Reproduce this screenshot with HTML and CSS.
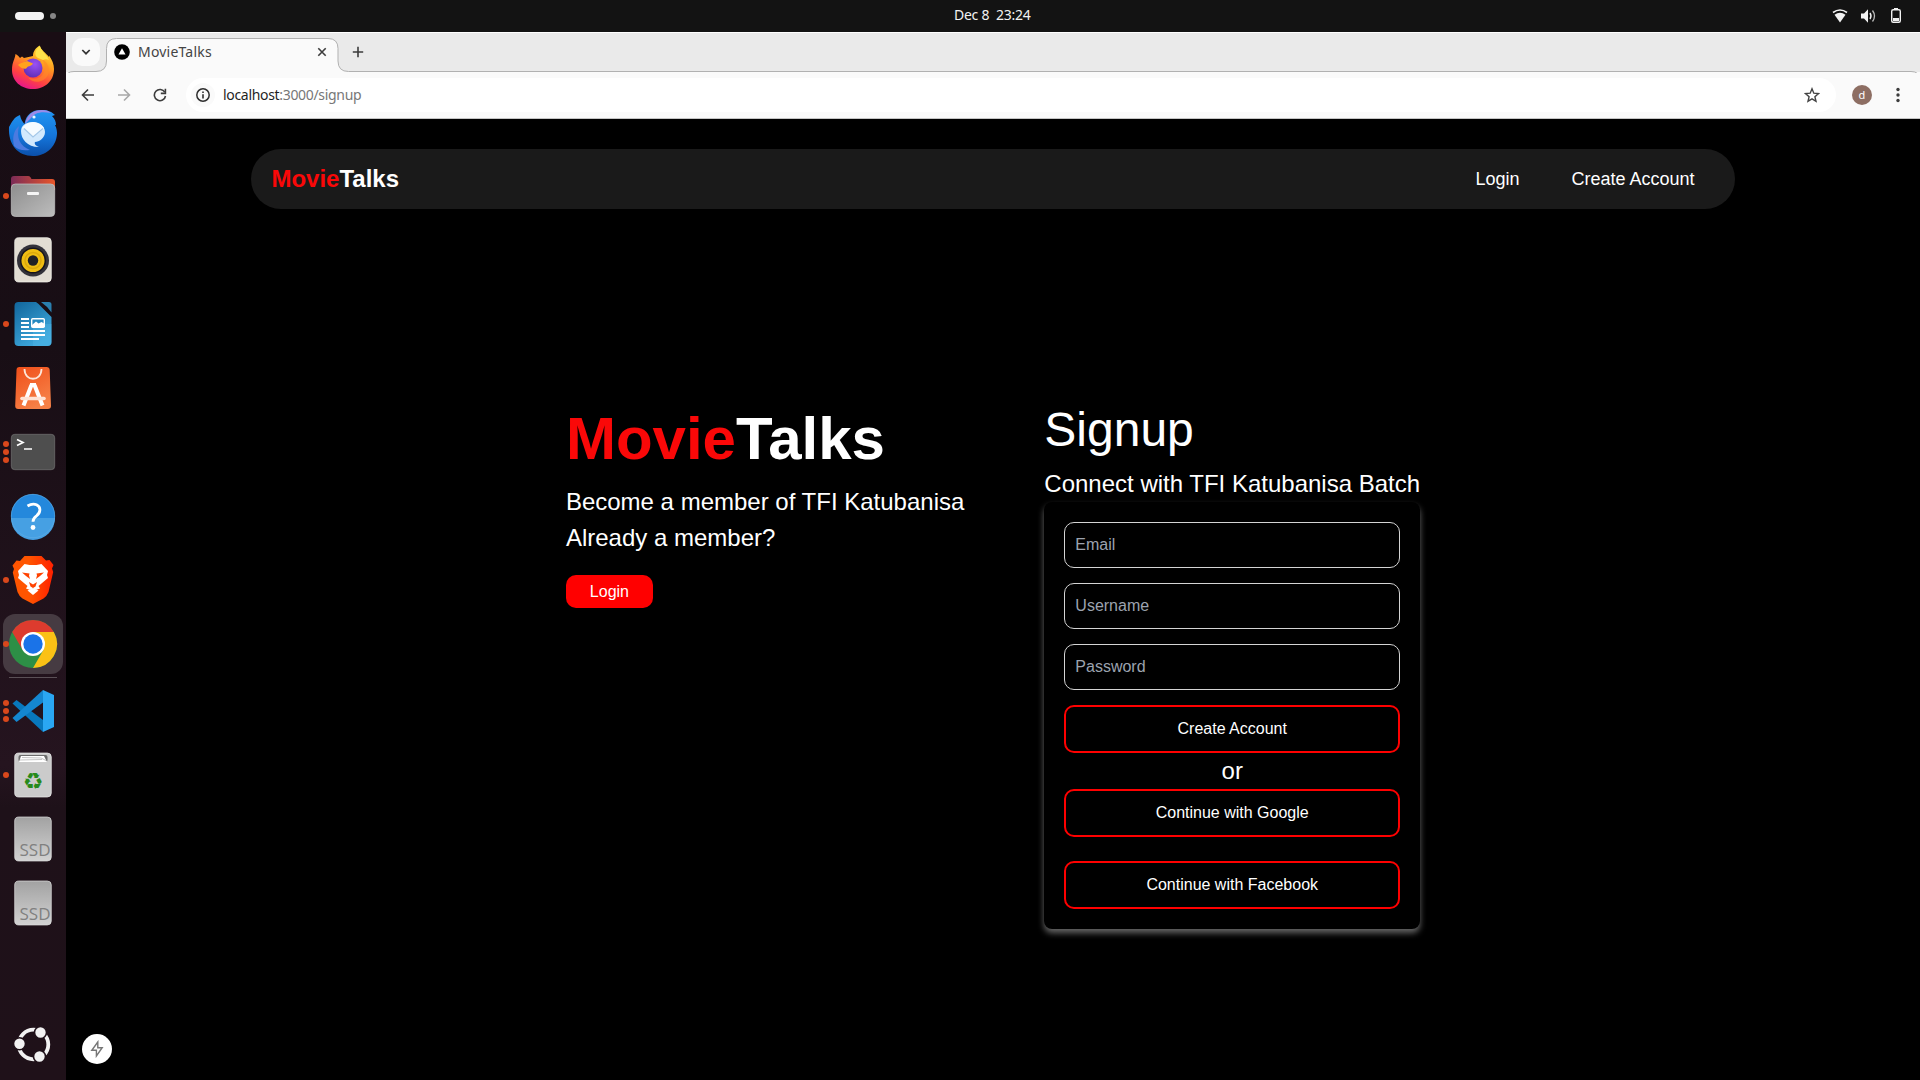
FILE: index.html
```html
<!DOCTYPE html>
<html lang="en">
<head>
<meta charset="utf-8">
<title>MovieTalks</title>
<link rel="stylesheet" href="styles.css">
</head>
<body>
<div class="desktop">
  <header class="topbar">
    <div class="workspaces"><span class="ws-active"></span><span class="ws-dot"></span></div>
    <div class="clock">Dec 8&nbsp; 23:24</div>
    <svg class="tray" width="88" height="32" viewBox="1832 0 88 32">
      <path d="M1833 12.500Q1840 7.500 1847 12.500" fill="none" stroke="#f2f2f2" stroke-width="1.600"/>
      <path d="M1834.500 14.800Q1840 10.500 1845.500 14.800L1840 22.500Z" fill="#f2f2f2"/>
      <path d="M1861 13.500h3l4-4.200v13.400l-4-4.200h-3z" fill="#f2f2f2"/>
      <path d="M1870 13q2 3 0 6" fill="none" stroke="#f2f2f2" stroke-width="1.400"/>
      <path d="M1872.500 10.500q4 5.500 0 11" fill="none" stroke="#bbb" stroke-width="1.300"/>
      <path d="M1894 8h4v2h-4z" fill="#f2f2f2"/>
      <rect x="1891.700" y="9.700" width="8.600" height="12.600" rx="1.500" fill="none" stroke="#f2f2f2" stroke-width="1.400"/>
      <path d="M1893 18h6v3h-6z" fill="#f2f2f2"/>
    </svg>
  </header>

  <nav class="dock">
    <div class="dock-item">
      <svg width="66" height="64" viewBox="0 0 66 64">
        <defs>
          <linearGradient id="fx" x1=".8" y1="0" x2=".35" y2="1"><stop offset="0" stop-color="#ffe83a"/><stop offset=".4" stop-color="#ff9a1f"/><stop offset=".75" stop-color="#ff4242"/><stop offset="1" stop-color="#e6178a"/></linearGradient>
          <radialGradient id="fxp" cx=".6" cy=".3" r=".8"><stop offset="0" stop-color="#9a50f5"/><stop offset="1" stop-color="#5a2bb0"/></radialGradient>
        </defs>
        <path d="M12 34C12 26 15 23 15.500 18C18 19 19 21 20 22L22 20.500L24 22L33 20C33 15 36 12 39.500 9.500C41 14 46 17 49 21V19.500C52 24 54 28 54 33C54 45 45 53 33 53S12 45 12 34Z" fill="url(#fx)"/>
        <circle cx="33" cy="32" r="9.500" fill="url(#fxp)"/>
        <path d="M18 29C21 26 24 27 27 25L33 27.500C32 30 28 30 27 31.500C26 34 22 33 18 29Z" fill="#ffa21c"/>
        <path d="M40 22C44 25 46 30 44 36C42 42 35 44 28 41.500C33 48 44 47 48 39C51 32 47 25 40 22Z" fill="#ff8a26" opacity=".6"/>
        <path d="M40 10C41 15 47 19 49 24C47 23 45 23 43 24L38 22C33 19 36 13 40 10Z" fill="#ffe24a"/>
      </svg>
    </div>
    <div class="dock-item">
      <svg width="66" height="64" viewBox="0 0 66 64">
        <defs><linearGradient id="tb" x1="0" y1="0" x2="0" y2="1"><stop offset="0" stop-color="#2196f3"/><stop offset=".6" stop-color="#1473d8"/><stop offset="1" stop-color="#0b4faa"/></linearGradient></defs>
        <path d="M9 27C12 22 14 17 20 15C21 20 23 22 24.500 24C26 14 33 9.500 42 10C48 10 52 12 55 15L52 16C55 19 56 22 56 25L55 25C57 29 57 32 57 34C56 48 45 56 33 56C18 56 8 45 9 27Z" fill="url(#tb)"/>
        <path d="M25 24C27 14 34 10 42 10C46 10 49 11 51 13C40 11 35 13 31 18L25 24Z" fill="#9b8be8"/>
        <path d="M14 46C12 37 14 30 19 26C16 38 20 46 30 50C23 51 18 50 14 46Z" fill="#4b7be0"/>
        <circle cx="34" cy="17" r="1.600" fill="#eaf6ff"/>
        <path d="M21 31C21 25 27 22 33 22S45 26 45 32C45 38 39 42 35 42C34 44 36 46 39 47C27 47 21 39 21 31Z" fill="#d2e9fd"/>
        <path d="M22 30C22 26 28 22 33 22S44.500 26 44 29L33 37L23 28" fill="#f5fbff"/>
        <path d="M24 28.500L33 37L43 28.500" fill="none" stroke="#a3c7e8" stroke-width="1.200"/>
      </svg>
    </div>
    <div class="dock-item">
      <svg width="66" height="64" viewBox="0 0 66 64">
        <defs>
          <linearGradient id="fo"><stop offset="0" stop-color="#7b2b57"/><stop offset="1" stop-color="#e9562a"/></linearGradient>
          <linearGradient id="fg" x2="1" y2="1"><stop offset="0" stop-color="#8e8e8e"/><stop offset="1" stop-color="#bdbdbd"/></linearGradient>
        </defs>
        <path d="M11 15q0-3 3-3h14q1.500 0 2.500 1.300l1 1.700h20.500q3 0 3 3v8H11z" fill="url(#fo)"/>
        <rect x="11.300" y="20" width="43.400" height="32.500" rx="4" fill="url(#fg)" stroke="#c4c4c4" stroke-width=".7"/>
        <rect x="27" y="28" width="12" height="3" rx="1" fill="#f5f5f5"/>
      </svg>
      <span class="dots"><i></i></span>
    </div>
    <div class="dock-item">
      <svg width="66" height="64" viewBox="0 0 66 64">
        <rect x="14.700" y="9.700" width="36.600" height="44.300" rx="4" fill="#e2ddd3" stroke="#f5f3ee" stroke-width=".7"/>
        <circle cx="33" cy="32.500" r="16" fill="#33323a"/><circle cx="33" cy="32.500" r="12.300" fill="#efbd13" stroke="#16151d" stroke-width="1.500"/><circle cx="33" cy="32.500" r="8" fill="none" stroke="#dba80c" stroke-width="1.500"/><circle cx="33" cy="32.500" r="5.200" fill="#202024"/>
      </svg>
    </div>
    <div class="dock-item">
      <svg width="66" height="64" viewBox="0 0 66 64">
        <defs><linearGradient id="wr" x1="0" y1="0" x2=".6" y2="1"><stop offset="0" stop-color="#11659b"/><stop offset="1" stop-color="#3faade"/></linearGradient></defs>
        <path d="M18.500 10H36Q39 12 41 14.500L51.500 25V50q0 4-4 4h-29q-4 0-4-4V14q0-4 4-4z" fill="url(#wr)"/>
        <path d="M33 32h18.500v18q0 4-4 4H33z" fill="#52b7e6" opacity=".4"/>
        <path d="M41 10h8q2.500 0 2.500 2.500V20.500Q47 14 41 10z" fill="#2a7fae"/>
        <path d="M21 27h8M21 31h8M21 35h8M21 39h24M21 43h24M21 47h18" stroke="#fff" stroke-width="2"/>
        <rect x="31.700" y="26.700" width="12.600" height="8.600" rx="1" fill="#2589c0" stroke="#fff" stroke-width="1.400"/>
        <path d="M32 35v-2l4-3.500 2.500 2 3-1.500L45 32v3z" fill="#fff"/>
      </svg>
      <span class="dots"><i></i></span>
    </div>
    <div class="dock-item">
      <svg width="66" height="64" viewBox="0 0 66 64">
        <defs><linearGradient id="ac" x2=".5" y2="1"><stop offset="0" stop-color="#f04e19"/><stop offset="1" stop-color="#f68046"/></linearGradient></defs>
        <path d="M19.500 11h27q3 0 3.200 3l1.300 36q0 3-3.200 3H18.200q-3 0-3-3l1.300-36q0-3 3-3z" fill="url(#ac)"/>
        <path d="M24.500 13c0 13 17 13 17 0" fill="none" stroke="#fde6d9" stroke-width="1.800"/>
        <path d="M31.500 29L23.500 49.500M34.500 29L42.500 49.500" stroke="#fff" stroke-width="4"/>
        <path d="M30 27h6v4h-6z" fill="#fff"/>
        <path d="M22 42.500H44" stroke="#ffe3d4" stroke-width="3.600" stroke-linecap="round"/>
      </svg>
    </div>
    <div class="dock-item">
      <svg width="66" height="64" viewBox="0 0 66 64">
        <rect x="11.300" y="14.300" width="43.400" height="35.400" rx="3.500" fill="#4e4e4e" stroke="#737373" stroke-width=".7"/>
        <path d="M17 19.500L23 22.500L17 25.500M24 29h8" fill="none" stroke="#fff" stroke-width="1.700"/>
      </svg>
      <span class="dots"><i></i><i></i><i></i></span>
    </div>
    <div class="dock-item">
      <svg width="66" height="64" viewBox="0 0 66 64">
        <circle cx="33" cy="32" r="22" fill="#2488dc"/><path d="M11 34h44a22 22 0 0 1-44 0z" fill="#46a0e3"/>
        <circle cx="33" cy="32" r="21.700" fill="none" stroke="#62aee5" stroke-width=".6"/>
        <path d="M27.500 22q5-3 9-1.200c5 2.500 4 8 0 11q-3.500 2.500-3.500 6" fill="none" stroke="#fff" stroke-width="2.800"/><circle cx="33" cy="43.500" r="2.400" fill="#fff"/>
      </svg>
    </div>
    <div class="dock-item">
      <svg width="66" height="64" viewBox="0 0 66 64">
        <defs><linearGradient id="br"><stop offset=".4" stop-color="#ff5500"/><stop offset="1" stop-color="#ff2000"/></linearGradient></defs>
        <path d="M24.500 8h17l4.500 4.500 3.500-.5 4 5-1.500 3.500 1.200 3.500L48.500 44q-1.500 4-5 6.500L33 56l-10.500-5.500q-3.500-2.500-5-6.500L12.800 24.500 14 21l-1.500-3.500 4-5 3.500.5z" fill="url(#br)"/>
        <path d="M24.500 16l5 1h7l5-1 6.500 7-1 4 1 3-9.500 8 1.500 2.500L36 42l-3-1.800L30 42l-4-1.500 1.500-2.500-9.500-8 1-3-1-4z" fill="#fff"/>
        <path d="M22 24.500l7.500 1-.5 2 1 3.500-4-3zM44 24.500l-7.500 1 .5 2-1 3.500 4-3zM29 34l4 2.500 4-2.500-1.500 4.500L33 40l-2.500-1.500z" fill="#ff4200"/>
        <path d="M27.500 42.500l5.500-2.500 5.500 2.500L33 47z" fill="#fff"/>
      </svg>
      <span class="dots"><i></i></span>
    </div>
    <div class="dock-item dock-active">
      <svg width="66" height="64" viewBox="0 0 66 64">
        <circle cx="33" cy="32" r="24" fill="#2d8f46"/>
        <path d="M12.200 20A24 24 0 0 1 53.800 20L33 20L22.600 38Z" fill="#dd3b2e"/>
        <path d="M53.800 20A24 24 0 0 1 33 56L43.400 38L33 20Z" fill="#fbc116"/>
        <circle cx="33" cy="32" r="12" fill="#fff"/><circle cx="33" cy="32" r="9.700" fill="#1a73e8"/>
      </svg>
      <span class="dots"><i></i></span>
    </div>
    <div class="dock-separator"></div>
    <div class="dock-item">
      <svg width="66" height="64" viewBox="0 0 66 64">
        <path d="M12.500 24.500L16.500 21 43 41V53Z" fill="#0878bd"/>
        <path d="M43 11L12.500 39 16.500 43 43 23.500Z" fill="#1487d1"/>
        <path d="M43 11L54 16V48L43 53Z" fill="#2aa7f3"/>
      </svg>
      <span class="dots"><i></i><i></i><i></i></span>
    </div>
    <div class="dock-item">
      <svg width="66" height="64" viewBox="0 0 66 64">
        <defs><linearGradient id="dk" x2="0" y2="1"><stop offset="0" stop-color="#a2a2a2"/><stop offset="1" stop-color="#d2d2d2"/></linearGradient></defs>
        <rect x="14.700" y="10" width="36.600" height="44" rx="4" fill="#cbcbcb" stroke="#ececec" stroke-width=".7"/>
        <rect x="18.500" y="12" width="29" height="7" rx="2" fill="#6c6c6c"/>
        <path d="M21 13h23l3 6H19z" fill="#fff"/><path d="M22 14.500l19 .5 5 2.500M20 17l22-.5" fill="none" stroke="#aaa" stroke-width=".7"/>
        <text class="recycle" x="33" y="46">♻</text>
      </svg>
      <span class="dots"><i></i></span>
    </div>
    <div class="dock-item">
      <svg width="66" height="64" viewBox="0 0 66 64">
        <rect x="14.700" y="10" width="36.600" height="44" rx="4" fill="url(#dk)" stroke="#ddd" stroke-width=".7"/>
        <text class="ssd" x="19.500" y="48.500" textLength="31" lengthAdjust="spacingAndGlyphs">SSD</text>
      </svg>
    </div>
    <div class="dock-item">
      <svg width="66" height="64" viewBox="0 0 66 64">
        <rect x="14.700" y="10" width="36.600" height="44" rx="4" fill="url(#dk)" stroke="#ddd" stroke-width=".7"/>
        <text class="ssd" x="19.500" y="48.500" textLength="31" lengthAdjust="spacingAndGlyphs">SSD</text>
      </svg>
    </div>
    <div class="dock-item dock-apps">
      <svg width="66" height="64" viewBox="0 0 66 64">
        <circle cx="33.500" cy="32.500" r="14.800" fill="none" stroke="#f2f2f2" stroke-width="3.800"/>
        <g fill="#f2f2f2" stroke="#1f1119" stroke-width="1.600"><circle cx="40.500" cy="20.500" r="6"/><circle cx="19.500" cy="31.800" r="6"/><circle cx="39.500" cy="44.500" r="6"/></g>
      </svg>
    </div>
  </nav>

  <section class="browser">
    <div class="tabstrip">
      <svg class="tab-outline" width="1854" height="41" viewBox="66 32 1854 41">
        <path d="M66 73V77Q66.500 71.500 74 71.500H96Q106.500 71.500 106.500 61V48.500Q106.500 38.500 116.500 38.500H328Q338 38.500 338 48.500V61Q338 71.500 348.500 71.500H1911Q1919.500 71.500 1919.500 79V81H66Z" fill="#fafafa" stroke="#b1b1b1"/>
      </svg>
      <button class="tab-search"><svg width="10" height="8" viewBox="0 0 10 8"><path d="M1.300 2L5 5.700 8.700 2" fill="none" stroke="#333" stroke-width="1.700"/></svg></button>
      <div class="tab">
        <svg width="16" height="16" viewBox="0 0 16 16"><circle cx="8" cy="8" r="7.800"/><path d="M8 4.300L11.500 10.500h-7z" fill="#fff"/></svg>
        <span class="tab-title">MovieTalks</span>
        <svg width="10" height="10" viewBox="0 0 10 10"><path d="M1.300 1.300l7.400 7.400M8.700 1.300L1.300 8.700" stroke="#3c3c3c" stroke-width="1.600"/></svg>
      </div>
      <svg class="new-tab" width="12" height="12" viewBox="0 0 12 12"><path d="M6 .8v10.400M.8 6h10.400" stroke="#3c3c3c" stroke-width="1.600"/></svg>
    </div>
    <div class="toolbar">
      <svg class="tool" width="14" height="14" viewBox="0 0 14 14"><path d="M13 7H2M7 1.500L1.500 7 7 12.500" fill="none" stroke="#3c3c3c" stroke-width="1.600"/></svg>
      <svg class="tool" width="14" height="14" viewBox="0 0 14 14"><path d="M1 7h11M7 1.500L12.500 7 7 12.500" fill="none" stroke="#a8a8a8" stroke-width="1.600"/></svg>
      <svg class="tool" width="14" height="14" viewBox="0 0 14 14"><path d="M11.800 4.200A5.600 5.600 0 1 0 12.500 8" fill="none" stroke="#3c3c3c" stroke-width="1.600"/><path d="M12.400 .8V5.400H7.800" fill="none" stroke="#3c3c3c" stroke-width="1.600"/></svg>
      <div class="omnibox">
        <span class="site-info"><svg width="14" height="14" viewBox="0 0 14 14"><circle cx="7" cy="7" r="6.200" fill="none" stroke="#2e2e2e" stroke-width="1.500"/><path d="M7 6.200v4.200M7 3.400v1.500" stroke="#2e2e2e" stroke-width="1.600"/></svg></span>
        <span class="url">localhost<span class="url-rest">:3000/signup</span></span>
        <svg class="star" width="16" height="16" viewBox="0 0 16 16"><path d="M8 1.800l1.800 4.400 4.700.4-3.600 3.100 1.100 4.600L8 11.900l-4 2.400 1.100-4.600L1.500 6.600l4.700-.4z" fill="none" stroke="#444" stroke-width="1.400"/></svg>
      </div>
      <span class="avatar">d</span>
      <svg class="menu" width="4" height="16" viewBox="0 0 4 16"><g fill="#3c3c3c"><circle cx="2" cy="2.500" r="1.700"/><circle cx="2" cy="8" r="1.700"/><circle cx="2" cy="13.500" r="1.700"/></g></svg>
    </div>

    <main class="page">
      <nav class="site-nav">
        <a class="logo"><span class="red">Movie</span>Talks</a>
        <div class="nav-links"><a>Login</a><a>Create Account</a></div>
      </nav>
      <div class="signup">
        <section class="intro">
          <h1><span class="red">Movie</span>Talks</h1>
          <p>Become a member of TFI Katubanisa</p>
          <p>Already a member?</p>
          <button class="login">Login</button>
        </section>
        <section class="join">
          <h2>Signup</h2>
          <p>Connect with TFI Katubanisa Batch</p>
          <form class="card">
            <input type="text" placeholder="Email">
            <input type="text" placeholder="Username">
            <input type="password" placeholder="Password">
            <button class="outline" type="button">Create Account</button>
            <span class="or">or</span>
            <button class="outline" type="button">Continue with Google</button>
            <button class="outline facebook" type="button">Continue with Facebook</button>
          </form>
        </section>
      </div>
      <div class="dev-badge"><svg width="14" height="18" viewBox="0 0 14 18"><path d="M7.800 2L1.800 10.300H6.400V16L12.200 7.700H7.800Z" fill="none" stroke="#777" stroke-width="1.400"/></svg></div>
    </main>
  </section>
</div>
</body>
</html>
```
FILE: styles.css
```css
* { box-sizing: border-box; }
body { margin: 0; background: #000; font-family: "Liberation Sans", Arial, sans-serif; }
p, h1, h2 { margin: 0; }
button, input { font: inherit; margin: 0; }
svg { display: block; flex: none; }

.desktop {
  width: 1920px; height: 1080px; overflow: hidden;
  display: grid; grid-template: 32px 1fr / 66px 1fr;
}

.topbar {
  grid-column: 1 / 3; background: #131313; color: #f2f2f2;
  display: grid; grid-template-columns: 1fr auto 1fr; align-items: center;
  padding-left: 15px;
}
.workspaces { display: flex; align-items: center; gap: 6px; }
.ws-active { width: 29px; height: 8px; border-radius: 4px; background: #f4f4f4; }
.ws-dot { width: 6px; height: 6px; border-radius: 50%; background: #868686; }
.clock { font: 14px/30px "Noto Sans", sans-serif; letter-spacing: -.25px; width: 78px; margin: 0 0 2px 51px; white-space: nowrap; }
.tray { justify-self: end; }

.dock {
  display: flex; flex-direction: column; padding: 4px 0;
  background: linear-gradient(#190d14, #180e15 30%, #25141f 70%, #1e1119 74%, #1f1119);
}
.dock-item { position: relative; height: 64px; flex: none; }
.dock-active::before {
  content: ""; position: absolute; left: 3px; top: 2px; width: 60px; height: 60px;
  border-radius: 12px; background: #463b42;
}
.dock-active svg { position: relative; }
.dock-separator { height: 1px; margin: 1px 9px; background: #5a5056; flex: none; }
.dock-apps { margin-top: auto; }
.dots {
  position: absolute; left: 3px; top: 0; height: 64px;
  display: flex; flex-direction: column; justify-content: center; gap: 2.200px;
}
.dots i { width: 6px; height: 6px; border-radius: 50%; background: #d9481c; }
.recycle { font: 23px "DejaVu Sans", sans-serif; fill: #278a1b; text-anchor: middle; }
.ssd { font: 16px "Open Sans", sans-serif; fill: #808080; }

.browser { display: flex; flex-direction: column; min-width: 0; }
.tabstrip {
  position: relative; height: 40px; flex: none; background: #eaeaea;
  border-top: 1px solid #fff; display: flex; align-items: center; padding-bottom: 2px;
}
.tab-outline { position: absolute; left: 0; top: -1px; }
.tab-search {
  position: relative; width: 28px; height: 28px; margin-left: 6px; padding: 0;
  border: 0; border-radius: 10px; background: #fafafa;
  display: flex; align-items: center; justify-content: center;
}
.tab {
  position: relative; width: 231px; height: 33px; margin-left: 7px; padding: 0 11px 0 7px;
  display: flex; align-items: center; gap: 8px;
}
.tab-title { flex: 1; font: 14px/20px "Noto Sans", sans-serif; letter-spacing: .2px; color: #444; }
.new-tab { position: relative; margin-left: 14px; }

.toolbar {
  height: 47px; flex: none; background: #fafafa; border-bottom: 1px solid #c4c4c4;
  display: flex; align-items: center; padding-left: 15px;
}
.tool { margin-right: 22px; }
.omnibox {
  width: 1650px; height: 34px; margin-left: -3px; padding: 0 16px 0 5px;
  border-radius: 17px; background: #fff; display: flex; align-items: center;
}
.site-info {
  width: 24px; height: 24px; border-radius: 50%; background: #fafafa;
  display: flex; align-items: center; justify-content: center; margin-right: 8px;
}
.url { font: 14px/20px "Noto Sans", sans-serif; letter-spacing: -.32px; color: #1f1f1f; }
.url-rest { color: #777; }
.star { margin-left: auto; }
.avatar {
  width: 20px; height: 20px; margin-left: 16px; border-radius: 50%;
  background: #8d6e63; color: #fff; font: 11px/20px "Noto Sans", sans-serif; text-align: center;
}
.menu { margin-left: 24px; }

.page { position: relative; flex: 1; background: #000; color: #fff; padding-top: 30px; }
.site-nav {
  width: 80%; height: 60px; margin: 0 auto; padding: 0 40px 0 20px;
  border-radius: 30px; background: #1a1a1a;
  display: flex; align-items: center; justify-content: space-between;
}
.logo { font-size: 24px; font-weight: bold; }
.red { color: #fa0808; }
.nav-links { display: flex; gap: 52px; font-size: 18px; }

.signup { display: flex; justify-content: center; gap: 80px; margin-top: 197px; }
.intro { padding-top: 3px; }
.intro h1 { font-size: 60px; line-height: 60px; margin-bottom: 15px; }
.intro p, .join p { font-size: 24px; line-height: 36px; }
.login {
  width: 87px; height: 33px; margin-top: 19px; padding: 0;
  border: 0; border-radius: 10px; background: #f00; color: #fff; font-size: 16px;
}
.join h2 { font-size: 48px; font-weight: normal; line-height: 48px; margin-bottom: 12px; }
.card {
  display: flex; flex-direction: column; padding: 20px; border-radius: 8px;
  box-shadow: 0 4px 6px rgba(255, 255, 255, .4);
}
.card input {
  height: 46px; margin-bottom: 15px; padding: 0 10px; width: 100%;
  border: 1px solid #d4d4d4; border-radius: 10px; background: #000; color: #fff;
  font-size: 16px; outline: 0;
}
.card input::placeholder { color: #9ca3af; opacity: 1; }
.outline {
  height: 48px; padding: 0; border: 2px solid #f00; border-radius: 10px;
  background: #000; color: #fff; font-size: 16px;
}
.or { height: 36px; line-height: 36px; font-size: 24px; text-align: center; }
.facebook { margin-top: 24px; }
.dev-badge {
  position: absolute; left: 16px; bottom: 16px; width: 30px; height: 30px;
  border-radius: 50%; background: #fff; display: flex; align-items: center; justify-content: center;
}
```
